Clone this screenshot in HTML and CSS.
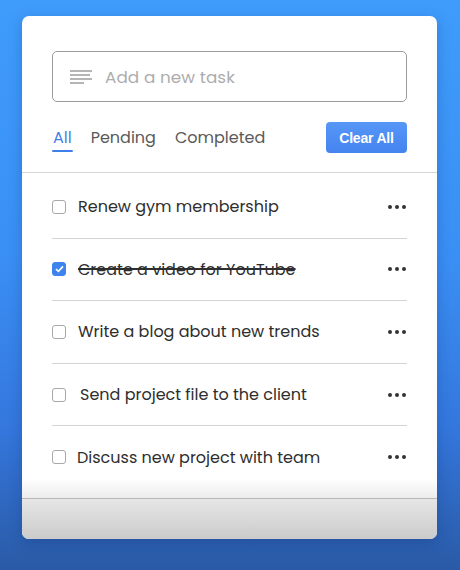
FILE: index.html
```html
<!DOCTYPE html>
<html>
<head>
<meta charset="utf-8">
<link rel="stylesheet" href="styles.css">
</head>
<body>
<div class="card">
  <div class="input-box">
    <svg class="input-icon" width="22" height="16" viewBox="0 0 22 16">
      <g stroke="#b5b5b5" stroke-width="2">
        <line x1="0" y1="2" x2="22" y2="2"/>
        <line x1="0" y1="6" x2="20" y2="6"/>
        <line x1="0" y1="10" x2="22" y2="10"/>
        <line x1="0" y1="14" x2="14" y2="14"/>
      </g>
    </svg>
    <span class="placeholder">Add a new task</span>
  </div>
  <div class="controls">
    <div class="tabs">
      <span class="tab active">All</span>
      <span class="tab">Pending</span>
      <span class="tab">Completed</span>
    </div>
    <button class="clear">Clear All</button>
  </div>
  <div class="list-wrap">
    <ul class="list">
      <li class="row"><span class="check"></span><span class="label">Renew gym membership</span><span class="dots"><i></i><i></i><i></i></span></li>
      <li class="row"><span class="check checked"><svg width="9" height="8" viewBox="0 0 9 8"><path d="M1 4.2 L3.4 6.4 L8 1.4" fill="none" stroke="#fff" stroke-width="1.6"/></svg></span><span class="label done">Create a video for YouTube</span><span class="dots"><i></i><i></i><i></i></span></li>
      <li class="row"><span class="check"></span><span class="label">Write a blog about new trends</span><span class="dots"><i></i><i></i><i></i></span></li>
      <li class="row"><span class="check"></span><span class="label shift">Send project file to the client</span><span class="dots"><i></i><i></i><i></i></span></li>
      <li class="row"><span class="check"></span><span class="label tight">Discuss new project with team</span><span class="dots"><i></i><i></i><i></i></span></li>
    </ul>
    <div class="fade"></div>
  </div>
  <div class="footer"></div>
</div>
</body>
</html>
```

FILE: styles.css
```css
* { box-sizing: border-box; }
html, body { margin: 0; height: 100%; }
body {
  width: 460px;
  height: 570px;
  overflow: hidden;
  background: linear-gradient(180deg, #3f9cfb 0%, #3a8ff5 45%, #3477dd 75%, #2a5aa6 100%);
  font-family: "Poppins", "Inter", "Noto Sans", sans-serif;
  padding: 16px 23px 31px 22px;
}
.card {
  height: 523px;
  background: #fff;
  border-radius: 7px;
  box-shadow: 0 4px 14px rgba(10, 40, 100, 0.25);
  display: flex;
  flex-direction: column;
  overflow: hidden;
}
.input-box {
  margin: 35px 30px 0 30px;
  height: 51px;
  border: 1px solid #9a9a9a;
  border-radius: 5px;
  display: flex;
  align-items: center;
  padding-left: 17px;
  gap: 13px;
}
.placeholder {
  color: #adadad;
  font-size: 16.8px;
  letter-spacing: 0.1px;
  margin-top: 1px;
}
.controls {
  margin: 20px 30px 0 31px;
  height: 31px;
  display: flex;
  align-items: center;
  justify-content: space-between;
}
.tabs { display: flex; gap: 19px; }
.tab {
  font-size: 16px;
  color: #5a5a5a;
  position: relative;
}
.tab.active { color: #3f7fe8; }
.tab.active::after {
  content: "";
  position: absolute;
  left: -1px;
  right: -1px;
  bottom: -2px;
  height: 2px;
  background: #3f7fe8;
  border-radius: 1px;
}
.clear {
  width: 81px;
  height: 31px;
  border: none;
  border-radius: 4px;
  background: linear-gradient(180deg, #5797f7, #4583f0);
  color: #fff;
  font-family: "Liberation Sans", Arial, sans-serif;
  font-weight: bold;
  font-size: 14px;
  letter-spacing: -0.2px;
  padding: 0;
}
.list-wrap {
  margin-top: 19px;
  border-top: 1px solid #d6d6d6;
  flex: 1;
  position: relative;
  overflow: hidden;
}
.list {
  list-style: none;
  margin: 0;
  padding: 3px 30px 0 30px;
}
.row {
  height: 62.6px;
  border-bottom: 1px solid #d4d4d4;
  display: flex;
  align-items: center;
}
.check {
  width: 14px;
  height: 14px;
  border: 1px solid #a8a8a8;
  border-radius: 3px;
  flex: none;
  display: flex;
  align-items: center;
  justify-content: center;
}
.check.checked {
  background: #3e84ee;
  border-color: #3e84ee;
}
.label {
  margin-left: 12px;
  font-size: 16px;
  color: #2e2e2e;
  flex: 1;
}
.label.shift { margin-left: 14px; }
.label.tight { margin-left: 11px; }
.label.done {
  text-decoration: line-through;
  text-decoration-thickness: 1.5px;
}
.dots { display: flex; gap: 3px; margin-right: 1px; }
.dots i {
  width: 4px;
  height: 4px;
  border-radius: 50%;
  background: #333;
}
.fade {
  position: absolute;
  left: 0;
  right: 0;
  bottom: 0;
  height: 30px;
  background: linear-gradient(180deg, rgba(255,255,255,0) 0%, #fff 35%, #ececec 100%);
}
.footer {
  height: 41px;
  border-top: 1px solid #b8b8b8;
  background: linear-gradient(180deg, #e6e6e6, #cbcbcb);
  flex: none;
}
```
